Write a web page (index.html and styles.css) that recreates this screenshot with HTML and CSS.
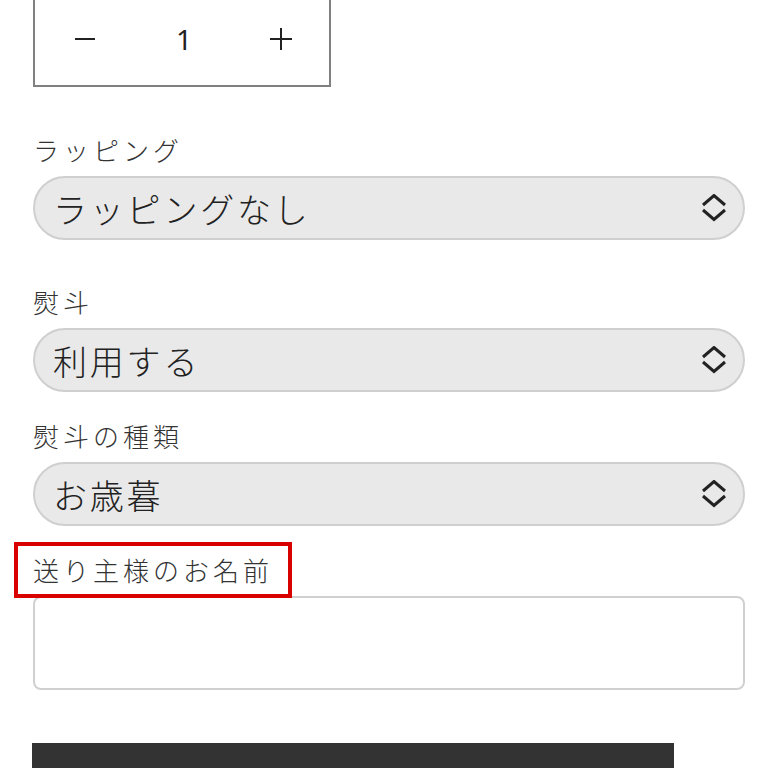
FILE: index.html
```html
<!DOCTYPE html>
<html lang="ja">
<head>
    <meta charset="UTF-8">
    <meta name="viewport" content="width=device-width, initial-scale=1.0">
    <title>商品オプション</title>
    <link rel="stylesheet" href="styles.css">
</head>
<body>

<div class="product-form">
    <div class="quantity">
        <button class="qty-btn" type="button" aria-label="減らす">
            <svg width="20" height="20" viewBox="0 0 20 20"><line x1="0" y1="10" x2="20" y2="10" stroke="#222" stroke-width="2"/></svg>
        </button>
        <span class="qty-value">1</span>
        <button class="qty-btn" type="button" aria-label="増やす">
            <svg width="22" height="22" viewBox="0 0 22 22"><line x1="0" y1="11" x2="22" y2="11" stroke="#222" stroke-width="2"/><line x1="11" y1="0" x2="11" y2="22" stroke="#222" stroke-width="2"/></svg>
        </button>
    </div>

    <div class="field field-wrap">
        <label class="field-label">ラッピング</label>
        <div class="select">
            <span>ラッピングなし</span>
            <svg class="chevron" width="26" height="28" viewBox="0 0 26 28"><polyline points="2,11 13,1.5 24,11" fill="none" stroke="#222" stroke-width="3"/><polyline points="2,16 13,25.5 24,16" fill="none" stroke="#222" stroke-width="3"/></svg>
        </div>
    </div>

    <div class="field field-noshi">
        <label class="field-label">熨斗</label>
        <div class="select">
            <span>利用する</span>
            <svg class="chevron" width="26" height="28" viewBox="0 0 26 28"><polyline points="2,11 13,1.5 24,11" fill="none" stroke="#222" stroke-width="3"/><polyline points="2,16 13,25.5 24,16" fill="none" stroke="#222" stroke-width="3"/></svg>
        </div>
    </div>

    <div class="field field-close">
        <label class="field-label">熨斗の種類</label>
        <div class="select">
            <span>お歳暮</span>
            <svg class="chevron" width="26" height="28" viewBox="0 0 26 28"><polyline points="2,11 13,1.5 24,11" fill="none" stroke="#222" stroke-width="3"/><polyline points="2,16 13,25.5 24,16" fill="none" stroke="#222" stroke-width="3"/></svg>
        </div>
    </div>

    <div class="field field-close">
        <label class="field-label marked" for="senderName">送り主様のお名前</label>
        <input class="text-input" type="text" id="senderName">
    </div>

    <button class="submit-btn" type="button"></button>
</div>

</body>
</html>
```

FILE: styles.css
```css
/* Product option form */
body {
    margin: 0;
    padding: 0;
    background: #fff;
    font-family: 'Noto Sans CJK JP', sans-serif;
    color: #222;
    overflow: hidden;
}

.product-form {
    padding: 0 23px 0 33px;
}

.quantity {
    display: grid;
    grid-template-columns: 100px 98px 96px;
    width: 294px;
    height: 92px;
    margin-top: -9px;
    border: 2px solid #808080;
}

.qty-btn {
    background: none;
    border: none;
    padding: 0;
    display: flex;
    align-items: center;
    justify-content: center;
    cursor: pointer;
}

.qty-value {
    display: flex;
    align-items: center;
    justify-content: center;
    font-family: 'Noto Sans', sans-serif;
    font-size: 28px;
    color: #222;
}

.field-label {
    display: block;
    height: 36px;
    line-height: 36px;
    margin-bottom: 8px;
    font-size: 26px;
    font-weight: 300;
    letter-spacing: 4px;
    color: #333;
}

.field-wrap {
    margin-top: 45px;
}

.field-noshi {
    margin-top: 44px;
}

.field-close {
    margin-top: 26px;
}

.marked {
    position: relative;
    width: max-content;
}

.marked::after {
    content: '';
    position: absolute;
    left: -19px;
    top: -10px;
    width: 270px;
    height: 48px;
    border: 4px solid #d90000;
}

.select {
    display: flex;
    align-items: center;
    justify-content: space-between;
    height: 60px;
    padding: 0 16px 0 18px;
    background: #e9e9e9;
    border: 2px solid #cfcfcf;
    border-radius: 32px;
    font-size: 34px;
    font-weight: 300;
    letter-spacing: 2.8px;
    color: #222;
}

.chevron {
    flex-shrink: 0;
}

.text-input {
    display: block;
    box-sizing: border-box;
    width: 100%;
    height: 94px;
    border: 2px solid #d0d0d0;
    border-radius: 8px;
    background: #fff;
}

.submit-btn {
    display: block;
    width: 642px;
    height: 60px;
    margin-top: 53px;
    margin-left: -1px;
    background: #333;
    border: none;
}
```
